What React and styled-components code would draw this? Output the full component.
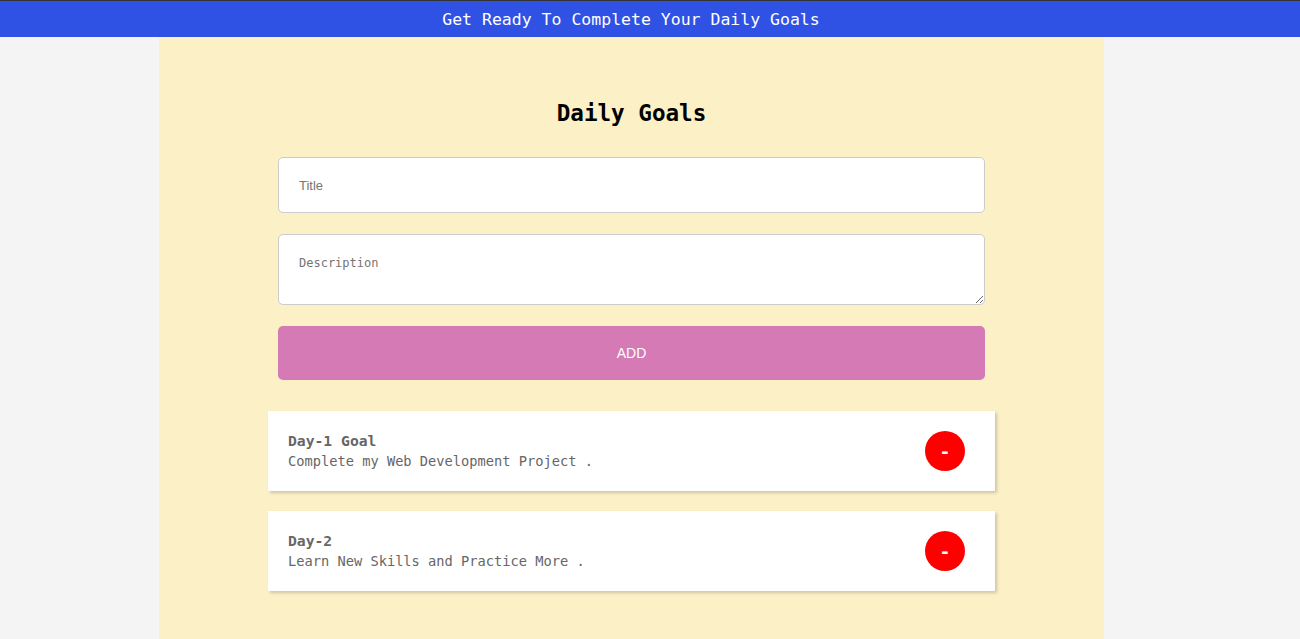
import React from "react";
import styled, { createGlobalStyle } from "styled-components";

const GlobalStyle = createGlobalStyle`
  html, body {
    margin: 0;
    padding: 0;
    background: #f4f4f4;
    font-family: "DejaVu Sans Mono", "Liberation Mono", monospace;
  }
  * {
    box-sizing: border-box;
  }
`;

// styles
const Header = styled.header`
  height: 37px;
  border-top: 1px solid #333;
  background: #2f52e5;
  color: #fff;
  display: flex;
  align-items: center;
  justify-content: center;
  font-size: 16.5px;
  padding-right: 38px;
`;

const Main = styled.main`
  width: 945px;
  margin: 0 0 0 159px;
  min-height: 602px;
  background: #fbf0c6;
  padding: 61px 0 40px;
  display: flex;
  flex-direction: column;
  align-items: center;
`;

const Heading = styled.h1`
  margin: 0 0 29px;
  font-size: 22.6px;
  line-height: 30px;
  font-weight: bold;
  color: #000;
`;

const Form = styled.form`
  width: 707px;
  display: flex;
  flex-direction: column;
  gap: 21px;
`;

const TitleInput = styled.input`
  height: 56px;
  width: 100%;
  border: 1px solid #ccc;
  border-radius: 5px;
  padding: 0 20px;
  font-family: "Liberation Sans", Arial, sans-serif;
  font-size: 13px;
  outline: none;
  &::placeholder {
    color: #757575;
  }
`;

const DescInput = styled.textarea`
  height: 71px;
  width: 100%;
  border: 1px solid #ccc;
  border-radius: 5px;
  padding: 21px 20px;
  font-family: "DejaVu Sans Mono", monospace;
  font-size: 12px;
  outline: none;
  display: block;
  &::placeholder {
    color: #757575;
  }
`;

const AddButton = styled.button`
  height: 54px;
  width: 100%;
  border: none;
  border-radius: 5px;
  background: #d67ab5;
  color: #fff;
  font-family: "Liberation Sans", Arial, sans-serif;
  font-size: 14px;
`;

const List = styled.div`
  width: 727px;
  margin-top: 31px;
  display: flex;
  flex-direction: column;
  gap: 20px;
`;

const Card = styled.div`
  height: 80px;
  background: #fff;
  box-shadow: 2px 2px 3px rgba(0, 0, 0, 0.18);
  display: flex;
  align-items: center;
  justify-content: space-between;
  padding: 0 30px 0 20px;
`;

const CardText = styled.div`
  display: flex;
  flex-direction: column;
  color: #666;
`;

const CardTitle = styled.span`
  font-weight: bold;
  font-size: 14.7px;
  line-height: 21px;
`;

const CardDesc = styled.span`
  font-size: 13.7px;
  line-height: 21px;
`;

const RemoveButton = styled.button`
  width: 40px;
  height: 40px;
  border-radius: 50%;
  border: none;
  background: #ff0000;
  color: #fff;
  font-family: "DejaVu Sans Mono", monospace;
  font-weight: bold;
  font-size: 18px;
  padding: 0;
  display: flex;
  align-items: center;
  justify-content: center;
`;

const goals = [
  { title: "Day-1 Goal", desc: "Complete my Web Development Project ." },
  { title: "Day-2", desc: "Learn New Skills and Practice More ." },
];

export default function App() {
  return (
    <>
      <GlobalStyle />
      <Header>Get Ready To Complete Your Daily Goals</Header>
      <Main>
        <Heading>Daily Goals</Heading>
        <Form onSubmit={(e) => e.preventDefault()}>
          <TitleInput placeholder="Title" />
          <DescInput placeholder="Description" />
          <AddButton type="submit">ADD</AddButton>
        </Form>
        <List>
          {goals.map((g) => (
            <Card key={g.title}>
              <CardText>
                <CardTitle>{g.title}</CardTitle>
                <CardDesc>{g.desc}</CardDesc>
              </CardText>
              <RemoveButton>-</RemoveButton>
            </Card>
          ))}
        </List>
      </Main>
    </>
  );
}
